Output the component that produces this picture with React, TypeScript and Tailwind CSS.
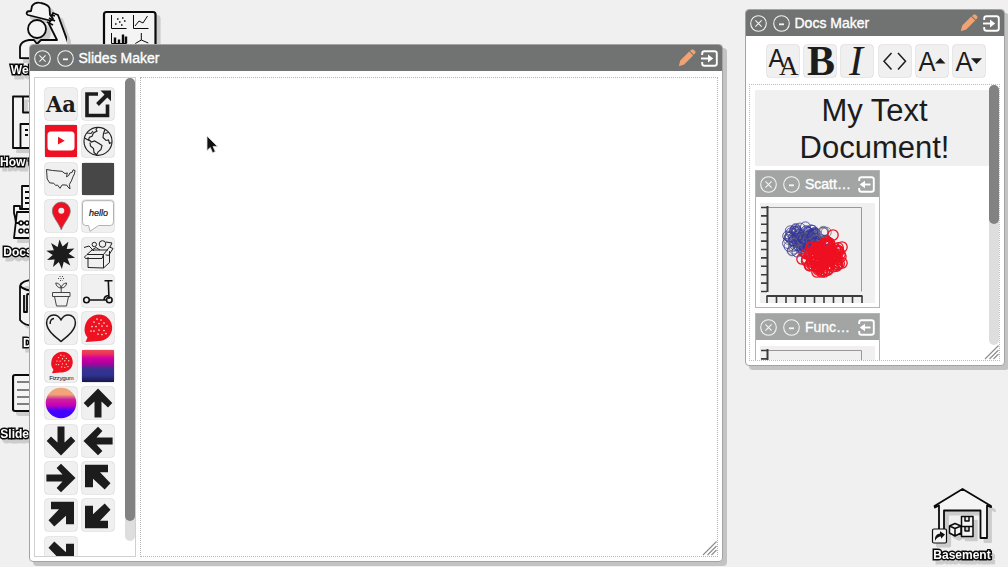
import type { ReactNode } from 'react';
import clsx from 'clsx';

type ArrowDir = 'up' | 'down' | 'left' | 'right' | 'nw' | 'ne' | 'sw' | 'se';

const sans = '"Liberation Sans", Arial, sans-serif';
const serif = '"Liberation Serif", serif';

// ---------- window chrome ----------

function CircleButton({ kind }: { kind: 'close' | 'minimize' }) {
  return (
    <svg className="size-[17px] shrink-0" viewBox="0 0 17 17" fill="none" stroke="#f4f4f4" strokeWidth="1.1">
      <circle cx="8.5" cy="8.5" r="7.8" />
      {kind === 'close' ? <path d="M5.4 5.4l6.2 6.2M11.6 5.4l-6.2 6.2" /> : <path d="M6 9.3h5" strokeWidth="1.8" />}
    </svg>
  );
}

function PencilIcon() {
  return (
    <svg className="size-[18px] shrink-0" viewBox="0 0 18 18" fill="#f1a472">
      <path d="M.8 17.200l1.500-5.800L11.200 2.600l4 4-9 9z" />
      <path d="M12 1.900l1.500-1.200q1.200-.8 2.300.2l1.200 1.200q1 1.100.1 2.200L15.900 5.800z" />
    </svg>
  );
}

function DockIcon({ out = false }: { out?: boolean }) {
  return (
    <svg className="size-[17px] shrink-0" viewBox="0 0 17 17" fill="none" stroke="#fff" strokeWidth="1.9">
      <path d="M1.2 5V3.5q0-2.3 2.3-2.3h10q2.3 0 2.3 2.3v10q0 2.3-2.3 2.3h-10q-2.3 0-2.3-2.3V12" />
      {out ? (
        <>
          <path d="M3 8.5h9.5" />
          <path d="M1.8 8.5L7 4.8v7.4z" fill="#fff" stroke="none" />
        </>
      ) : (
        <>
          <path d="M0 8.5h8.5" />
          <path d="M12.2 8.5L7 4.6v7.8z" fill="#fff" stroke="none" />
        </>
      )}
    </svg>
  );
}

function TitleBar({ title }: { title: string }) {
  return (
    <div className="flex h-[26px] shrink-0 items-center rounded-t-[3px] bg-[#707372] pr-[4px] pl-[4px] text-[14px] text-white">
      <CircleButton kind="close" />
      <div className="w-[5.500px]" />
      <CircleButton kind="minimize" />
      <span className="ml-[5px] flex-1 leading-[16px] [-webkit-text-stroke:0.35px_white]">{title}</span>
      <PencilIcon />
      <div className="w-[5px]" />
      <DockIcon />
    </div>
  );
}

function ResizeGrip() {
  return (
    <svg className="absolute right-0 bottom-0 size-[15px]" viewBox="0 0 15 15" stroke="#8c8c8c" strokeWidth="1.1">
      <path d="M1 14L14.5 .5M5.5 14L14.5 5M9.5 14l5-5" />
    </svg>
  );
}

function Window({ title, className, children }: { title: string; className: string; children: ReactNode }) {
  return (
    <div
      className={clsx(
        'absolute flex flex-col rounded-[4px] border border-[#a3a3a3] bg-white shadow-[4px_4px_0_#c3c3c3]',
        className,
      )}
    >
      <TitleBar title={title} />
      {children}
    </div>
  );
}

// ---------- palette icons, all on a 32x32 grid ----------

const arrowTransforms: Record<ArrowDir, string> = {
  up: '',
  right: 'rotate(90 16 16)',
  down: 'rotate(180 16 16)',
  left: 'rotate(270 16 16)',
  nw: '',
  ne: 'translate(32 0) scale(-1 1)',
  sw: 'translate(0 32) scale(1 -1)',
  se: 'rotate(180 16 16)',
};

function Arrow({ dir }: { dir: ArrowDir }) {
  const diagonal = ['nw', 'ne', 'sw', 'se'].includes(dir);
  const points = diagonal
    ? '3,2.8 26,2.8 26,10.3 18,10.3 28.5,21.3 22.7,27.6 11,16.8 11,25.3 3,25.3'
    : '16,1.5 30.3,16 26,20.4 19.5,14.5 19.5,30.6 12.5,30.6 12.5,14.5 6,20.4 1.7,16';
  return <polygon points={points} transform={arrowTransforms[dir]} fill="#1c1c1c" />;
}

function Burst() {
  const spikes = 10;
  const points = Array.from({ length: spikes * 2 }, (_, i) => {
    const r = i % 2 === 0 ? 14.8 : 8;
    const a = (i * Math.PI) / spikes - Math.PI / 2 - 0.08;
    return `${15.7 + r * Math.cos(a)},${16.3 + r * Math.sin(a)}`;
  }).join(' ');
  return <polygon points={points} fill="#1c1c1c" />;
}

function GumBlob() {
  return (
    <>
      <path d="M3.5 30l2-4.5C2.5 22 2.2 18.500 2.700 15.500 3.700 8 9.500 2.500 17 2.500c7.500 0 13.200 6 13.200 13.300C30.200 23.500 24 29 17 29c-4 0-8 .8-13.500 1z" fill="#ee1122" />
      <g fill="#ffe5c8">
        {[
          [15, 7], [19, 8], [12, 10], [17, 11.5], [22, 11], [10, 14.5], [14, 14.5], [20, 14], [25, 14],
          [12, 19], [17, 18], [22, 18.5], [16, 22], [20, 22.5], [24, 21.5], [9, 19],
        ].map(([x, y]) => (
          <circle key={`${x}-${y}`} cx={x} cy={y} r={0.85} />
        ))}
      </g>
    </>
  );
}

const paletteIcons: ReactNode[] = [
  <text x="1" y="24" fontFamily='"DejaVu Serif", serif' fontWeight="700" fontSize="22.500" textLength="30" lengthAdjust="spacingAndGlyphs" fill="#1c1c1c">Aa</text>,
  <g fill="none" stroke="#1c1c1c" strokeWidth="3.600">
    <path d="M16 6H5v21.500h20.500V16.500" />
    <path d="M15.500 16.500L25 7" strokeWidth="3.900" />
    <path d="M18.500 2.500h10.500v10.700z" fill="#1c1c1c" stroke="none" />
  </g>,
  <>
    <rect width="32" height="32" fill="#ee1122" />
    <rect x="2.500" y="6.500" width="27" height="19" rx="3.500" fill="#fff" />
    <path d="M13 11.800v7.800l6.700-3.900z" fill="#ee1122" />
  </>,
  <g fill="none" stroke="#222" strokeWidth="1.150">
    <circle cx="16" cy="16.300" r="14" />
    <path d="M15.500 2.500l-1.500 2 1 1.500-3.500 2-1.500 3.200-2.500 1-1 2.300 3 2.500 3-1 4.500 2.500 3 2-1 4-3 2.500-1.500 3-2.500-2.500-.5-4-3-2.500-.5-3.500M2.500 13l4.500 2.500" />
    <path d="M23 4.500l-1.500 4-.5 4 3 3 2.500-.5 1 3.500 2-1M22.500 8.500l4-1M5 8l4 .5 2-2.500" />
  </g>,
  <path d="M1.500 6.500l6 1 9.500.8 3 2.300 2.300-.7-.8 4 2.300-1.500 1-2.400 2.300-.6 1-2.600 2 .8-.7 3.300-1.500 3-1.500 4-2 3.500.6 4.600-2-1.900-1.300-2-4.600-.2-2.100 3.400-2.500-3.300-1.800.5-2-2.300-4-.3-2.500-4z" fill="none" stroke="#333" strokeWidth="1" />,
  <rect width="32" height="32" fill="#474747" />,
  <>
    <path d="M16.300 30C14 23 7.300 17 7.300 11a9 9 0 0118 0c0 6-6.700 12-9 19z" fill="#ee1122" stroke="#777" strokeWidth=".7" />
    <circle cx="16.300" cy="10.800" r="3" fill="#eee" />
  </>,
  <>
    <path d="M3.500.7h25q3 0 3 3v18q0 3.800-3 3.800H16.500L8 31.300 6.600 25.500H3.500q-3 0-3-3.800v-18q0-3 3-3z" fill="#fff" stroke="#a9a9a9" strokeWidth=".9" />
    <text x="7" y="16" fontFamily={sans} fontStyle="italic" fontSize="9" fill="#111" stroke="#111" strokeWidth=".2">hello</text>
  </>,
  <Burst />,
  <g fill="none" stroke="#222" strokeWidth="1">
    <path d="M5 16.500h16.500V30L6 29.500V19M21.500 30l6-5.500V13M21.500 16.500L27.500 9 31 10.500l-4.500 7-3-.7M5 16.500L2.500 19l1 1.500H20l1.500-4M5 16.500l5-4.500h16" />
    <circle cx="20.500" cy="6" r="3.300" /><circle cx="12.300" cy="6.500" r="2.200" />
    <path d="M2 9.500l5-1.500 5 5M9 12.500l5-3 4 2.500M24 4l6 1-2 4" />
  </g>,
  <g fill="none" stroke="#444" strokeWidth="1">
    <path d="M7.500 17.500h17.500v4H7.500zM9.500 21.500L11.500 31h10l2-9.500M16.200 17V12M16.200 13c-3 0-5-2-5.500-5 3 0 5 2 5.500 5 .5-3 2.500-5 5.500-5-.5 3-2.500 5-5.500 5" />
    <path d="M13 3.500h7M14.500 1.500h4M15 5.500h3" strokeDasharray="1 1.500" />
  </g>,
  <g fill="none" stroke="#111" strokeWidth="1.600">
    <circle cx="4.500" cy="25" r="2.800" /><circle cx="27.300" cy="25" r="2.800" />
    <path d="M7 25h17M27 24L26.300 5.500M22.500 5.800h8M22 25q0-4 4.500-4.500" />
  </g>,
  <path d="M16 29.500C10 24.500 1.600 18.500 1.600 10.800 1.600 6 5 3 8.700 3c3.300 0 5.700 2 7.300 4.800C17.600 5 20 3 23.300 3 27 3 30.400 6 30.400 10.800 30.400 18.500 22 24.500 16 29.500zM5.200 12c-.3-3 1.200-5.300 3.800-5.500" fill="none" stroke="#1c1c1c" strokeWidth="1.500" />,
  <GumBlob />,
  <>
    <g transform="translate(4.200 -.2) scale(.78)"><GumBlob /></g>
    <text x="4.200" y="29.500" textLength="24.500" fontFamily={sans} fontSize="6.200" fill="#111">Fizzygum</text>
  </>,
  <>
    <linearGradient id="dusk" x2="0" y2="1">
      <stop offset="0" stopColor="#e84a5a" />
      <stop offset=".12" stopColor="#ee3058" />
      <stop offset=".25" stopColor="#d000a5" />
      <stop offset=".42" stopColor="#b0009c" />
      <stop offset=".6" stopColor="#343490" />
      <stop offset=".8" stopColor="#30308e" />
      <stop offset="1" stopColor="#171747" />
    </linearGradient>
    <rect width="32" height="32" fill="url(#dusk)" />
  </>,
  <>
    <linearGradient id="sunset" x2="0" y2="1">
      <stop offset=".22" stopColor="#f0a478" />
      <stop offset=".38" stopColor="#cf20a0" />
      <stop offset=".58" stopColor="#c800b5" />
      <stop offset=".75" stopColor="#4200ff" />
    </linearGradient>
    <circle cx="16" cy="16" r="15.300" fill="url(#sunset)" />
  </>,
  <Arrow dir="up" />,
  <Arrow dir="down" />,
  <Arrow dir="left" />,
  <Arrow dir="right" />,
  <Arrow dir="nw" />,
  <Arrow dir="ne" />,
  <Arrow dir="sw" />,
  <Arrow dir="se" />,
];

function Tile({ children }: { children: ReactNode }) {
  return (
    <div className="size-[32px] shrink-0 rounded-[3px] bg-[#f0f0f0] shadow-[0_0_0_0.5px_#cfcfcf]">
      <svg className="size-full overflow-visible" viewBox="0 0 32 32">{children}</svg>
    </div>
  );
}

// ---------- docs toolbar ----------

const docTools: ReactNode[] = [
  <g fill="#1c1c1c">
    <text x="1.500" y="21.500" fontFamily={sans} fontSize="26" textLength="16" lengthAdjust="spacingAndGlyphs">A</text>
    <text x="12" y="29.500" fontFamily={serif} fontSize="27">A</text>
  </g>,
  <text x="3" y="30.300" fontFamily={serif} fontWeight="700" fontSize="43" textLength="28" lengthAdjust="spacingAndGlyphs" fill="#1c1c1c">B</text>,
  <text x="8" y="29.800" fontFamily={serif} fontStyle="italic" fontSize="42" fill="#1c1c1c">I</text>,
  <path d="M12.500 8L5 16.300l7.500 8.200M19 8l7.500 8.300L19 24.500" fill="none" stroke="#1c1c1c" strokeWidth="1.500" />,
  <g fill="#1c1c1c">
    <text x="2.500" y="25.500" fontFamily={sans} fontSize="28" textLength="17" lengthAdjust="spacingAndGlyphs">A</text>
    <path d="M19 18.500l5.300-5.500 5.200 5.500z" />
  </g>,
  <g fill="#1c1c1c">
    <text x="2.500" y="25.500" fontFamily={sans} fontSize="28" textLength="17" lengthAdjust="spacingAndGlyphs">A</text>
    <path d="M18 13.300h11l-5.500 5.700z" />
  </g>,
];

// ---------- embedded plots ----------

// small seeded generator so the clouds look the same on every render
function cloud(seed: number, count: number, cx: number, cy: number, spread: number) {
  let s = seed;
  const next = () => {
    s = (s * 16807) % 2147483647;
    return s / 2147483647;
  };
  return Array.from({ length: count }, () => {
    const a = next() * Math.PI * 2;
    const r = Math.pow(next(), 0.8) * spread;
    return { x: cx + r * Math.cos(a), y: cy + r * Math.sin(a) * 0.85 };
  });
}

const bluePoints = [...cloud(71, 110, 43, 37, 17), ...cloud(977, 30, 56, 37, 14)];
const redPoints = [...cloud(419, 130, 64, 54, 18), { x: 42, y: 56 }, { x: 73, y: 32 }, { x: 82, y: 44 }, { x: 82, y: 60 }, { x: 57, y: 69 }];

function PlotAxes() {
  return (
    <g fill="none" stroke="#3c3c3c">
      <path d="M8 4.500h93.500v84" stroke="#999" strokeWidth="1" />
      <path d="M7.500 3v86" strokeWidth="2" />
      <path d="M6.500 93h96" strokeWidth="2" />
      {Array.from({ length: 11 }, (_, i) => (
        <path key={i} d={`M1 ${4.5 + i * 8.4}h6M${7 + i * 9.5} 93v7`} strokeWidth="1.600" />
      ))}
    </g>
  );
}

function PlotCard({ title, scatter = false }: { title: string; scatter?: boolean }) {
  return (
    <div className="h-[138px] w-[125px] shrink-0 border border-[#b5b5b5] bg-white">
      <div className="flex h-[26px] items-center bg-[#a3a5a4] px-[4px] text-[14px] text-white">
        <CircleButton kind="close" />
        <div className="w-[6px]" />
        <CircleButton kind="minimize" />
        <span className="ml-[5px] flex-1 leading-[16px] [-webkit-text-stroke:0.35px_white]">{title}</span>
        <DockIcon out />
      </div>
      <svg className="mt-[6px] ml-[4px] h-[100px] w-[115px] bg-[#f0f0f0]" viewBox="0 0 115 100">
        <PlotAxes />
        {scatter && (
          <g fill="none">
            {bluePoints.map((p, i) => (
              <circle key={i} cx={p.x} cy={p.y} r="5" stroke={i % 3 === 0 ? '#66667a' : '#33339c'} strokeWidth=".8" />
            ))}
            {redPoints.map((p, i) => (
              <circle key={i} cx={p.x} cy={p.y} r="5.200" stroke="#ee1122" strokeWidth="1.300" />
            ))}
          </g>
        )}
      </svg>
    </div>
  );
}

// ---------- desktop ----------

function Shortcut({ label, className, iconClass, viewBox, children }: {
  label?: string;
  className: string;
  iconClass: string;
  viewBox: string;
  children: ReactNode;
}) {
  return (
    <div className={clsx('absolute flex flex-col items-center', className)}>
      <svg
        className={clsx('shrink-0 drop-shadow-[4px_4px_0_#cccccc]', iconClass)}
        viewBox={viewBox}
        fill="#f4f4f4"
        stroke="#0a0a0a"
        strokeWidth="1.800"
        strokeLinejoin="round"
      >
        {children}
      </svg>
      {label && (
        <span className="text-[12px] leading-[14px] font-bold whitespace-nowrap text-white drop-shadow-[3px_4px_0_#cccccc] [-webkit-text-stroke:3px_#0a0a0a] [paint-order:stroke_fill]">
          {label}
        </span>
      )}
    </div>
  );
}

function DesktopShortcuts() {
  return (
    <>
      <Shortcut label="Welcome" className="top-0 left-[-5px] w-[84px]" iconClass="h-[63px] w-[60px]" viewBox="7 0 60 63">
        <path d="M20 58V47q1-6 9-7h5l3 4 4-4h16L49 24l4-11 5 2 16 44z" />
        <circle cx="37" cy="29" r="9" />
        <path d="M27.500 11.500l3.500-.5 1-5q3-4.500 9-3 7 1.500 8.500 5l.5 7 3 3.500q-1 3-5 1.500L28 15q-2.500-1.500-.5-3.500z" />
        <path d="M47 22l6 3M49 18l6 3M51 15l4 1" />
      </Shortcut>
      <Shortcut className="top-[10px] left-[101px] w-[60px]" iconClass="h-[60px] w-[60px]" viewBox="101 10 60 60">
        <rect x="104" y="12" width="51.500" height="54" rx="2.500" strokeWidth="2.200" />
        <g fill="none" strokeWidth="1">
          <path d="M111.500 15v13.500h15M133.500 15v13.500h15M111.500 33v10.500h15" />
          <path d="M135 26l4-5 4 2 4.500-7M141.300 33v7M141.300 40l-6 3.500M141.300 40l7 3" />
          <path d="M115 43.500v-6M119 43.500v-4M123 43.500v-9M126 43.500v-7" strokeWidth="2.400" />
        </g>
        <path d="M115 24h1.500M119 22h1.500M117 19h1.500M122 18h1.500M124 21h1.500M121 25h1.500" strokeWidth="1.500" />
      </Shortcut>
      <Shortcut label="How to use" className="top-[94px] left-[-1px] w-[66px]" iconClass="h-[61px] w-[42px]" viewBox="12 93 42 61">
        <path d="M14 95.500h38V147H14zM24 96v15.500h28M21.500 147v-24H52" />
        <path d="M26 129h3M26 134h3" />
      </Shortcut>
      <Shortcut label="Docs Maker" className="top-[184px] left-[3px] w-[68px]" iconClass="h-[61px] w-[48px]" viewBox="13 184 48 61">
        <path d="M22 211v-25h26v25M25 192h18M25 198h18M25 203h18" />
        <path d="M14 213v-7h6v3h30v14H16l-1-6zM14 238l3-26h34l4 26z" />
        <g strokeWidth="1.500">
          <circle cx="21" cy="223" r="2" /><circle cx="27" cy="223" r="2" />
          <circle cx="21" cy="231" r="2" /><circle cx="27" cy="231" r="2" />
        </g>
      </Shortcut>
      <Shortcut label="Data" className="top-[276px] left-[18px] w-[36px]" iconClass="h-[60px] w-[40px]" viewBox="16 276 40 60">
        <path d="M20 286q2-6 14-6t18 6v34q-4 6-16 6t-16-6zM20 286q5 5 16 5t16-5M24 295v17h3v-17q0-2 4 0" />
      </Shortcut>
      <Shortcut label="Slides Maker" className="top-[372px] left-0 w-[74px]" iconClass="h-[55px] w-[50px]" viewBox="12 372 50 55">
        <rect x="13" y="375" width="45" height="36" rx="2" strokeWidth="2.200" />
        <path d="M17 382h36M17 390h36M17 397h36M17 404h36" strokeWidth="1" />
      </Shortcut>
      <Shortcut label="Basement" className="top-[487px] left-[928px] w-[68px]" iconClass="h-[61px] w-[62px]" viewBox="931 487 62 61">
        <path d="M939 505.500L935 507.500 934.500 506 962.500 489l28.500 17v1.200l-4-1.700V538h-6.500v-27.500H944V538h-5z" />
        <path d="M961.500 516.500h11.500v10h-11.500zM961.500 526.500h11.500v10h-11.500zM965 517v4h4v-4M965 527v4h4v-4M949.500 526l5.500-2.500 6 2.500v7l-6 3-5.500-3zM949.500 526l5.500 2.500 6-2.500M955 528.500v7.500" strokeWidth="1.500" />
        <rect x="932.500" y="529" width="14" height="14" rx="1.500" strokeWidth="1.200" />
        <path d="M935 541q-1-6.500 5-7.500v-2.200l5 3.200-4 4.300v-2.300q-4 0-6 4.500z" fill="#111" stroke="none" />
      </Shortcut>
    </>
  );
}

function Cursor() {
  return (
    <svg className="absolute top-[135px] left-[205px] h-[20px] w-[15px]" viewBox="0 0 15 20">
      <path d="M2 1v14.500l3.300-3 2.300 5.300 2.700-1.200-2.300-5.200h4.500z" fill="#111" stroke="#ddd" strokeWidth=".8" />
    </svg>
  );
}

function SlidesWindow() {
  return (
    <Window title="Slides Maker" className="top-[44px] left-[29px] h-[518px] w-[694px]">
      <div className="flex min-h-0 flex-1 gap-[4px] px-[4px] pt-[6px] pb-[4px]">
        <div className="flex w-[102px] shrink-0 overflow-hidden border border-[#d0d0d0] pt-[10px] pl-[10px]">
          <div className="grid grid-cols-[32px_32px] content-start gap-x-[5.300px] gap-y-[5.400px]">
            {paletteIcons.map((icon, i) => (
              <Tile key={i}>{icon}</Tile>
            ))}
          </div>
          <div className="mt-[-10px] ml-[10.700px] h-[463px] w-[10px] shrink-0 rounded-full bg-[#dedede]">
            <div className="h-[443px] rounded-full bg-[#828282]" />
          </div>
        </div>
        <div className="relative flex-1 border border-dotted border-[#b5b5b5]">
          <ResizeGrip />
        </div>
      </div>
    </Window>
  );
}

function DocsWindow() {
  return (
    <Window title="Docs Maker" className="top-[9px] left-[745px] h-[357px] w-[260px]">
      <div className="mt-[9px] ml-[2px] flex h-[32px] shrink-0 justify-center gap-[5.400px]">
        {docTools.map((tool, i) => (
          <Tile key={i}>{tool}</Tile>
        ))}
      </div>
      <div className="relative mr-[4px] mb-[4px] ml-[3px] mt-[7px] flex min-h-0 flex-1 overflow-hidden border border-dotted border-[#bdbdbd]">
        <div className="flex w-[239px] shrink-0 flex-col pt-[5px] pl-[5px]">
          <div className="h-[76px] shrink-0 bg-[#f0f0f0] pt-[2px] pl-[5px] text-center text-[31px] leading-[37px] text-[#1c1c1c]">
            My Text
            <br />
            Document!
          </div>
          <div className="mt-[4px] flex flex-col gap-[5px]">
            <PlotCard title="Scatt…" scatter />
            <PlotCard title="Func…" />
          </div>
        </div>
        <div className="h-[260px] w-[10px] shrink-0 rounded-full bg-[#dedede]">
          <div className="h-[139px] rounded-full bg-[#828282]" />
        </div>
        <ResizeGrip />
      </div>
    </Window>
  );
}

export default function App() {
  return (
    <main className="relative h-[567px] w-[1008px] overflow-hidden bg-[#f0f0f0] font-['Liberation_Sans',Arial,sans-serif]">
      <DesktopShortcuts />
      <SlidesWindow />
      <DocsWindow />
      <Cursor />
    </main>
  );
}
